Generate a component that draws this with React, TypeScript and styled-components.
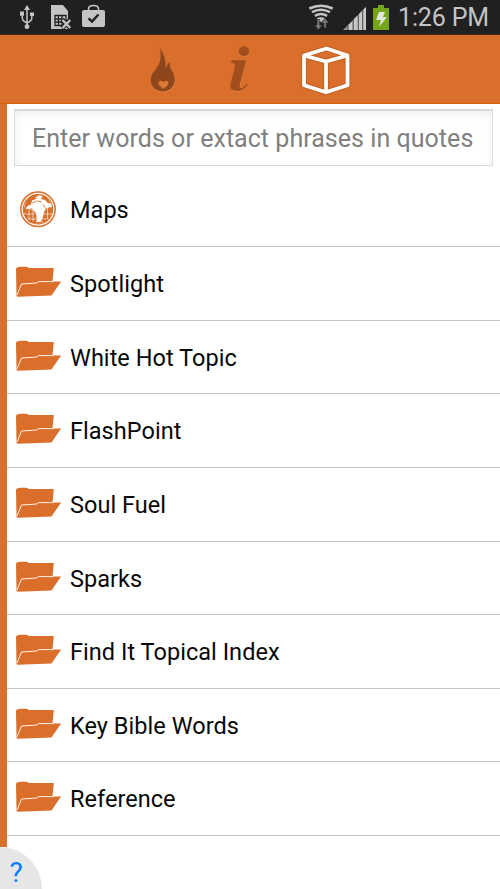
import React from "react";
import styled, { createGlobalStyle } from "styled-components";

const ORANGE = "#d96f2b";

const GlobalStyle = createGlobalStyle`
  * { box-sizing: border-box; }
  body { margin: 0; background: #fff; font-family: Roboto, "Noto Sans", sans-serif; overflow: hidden; }
`;

const Screen = styled.div`
  position: relative;
  width: 500px;
  height: 889px;
  overflow: hidden;
  display: flex;
  flex-direction: column;
  background: #fff;
`;

const StatusBar = styled.header`
  height: 35px;
  flex: none;
  display: flex;
  justify-content: space-between;
  background: #202020;
  border-bottom: 1px solid #4a2c18;
`;

const StatusGroup = styled.div`
  display: flex;
`;

const Clock = styled.time`
  width: 103px;
  padding-left: 1px;
  color: #c4c4c4;
  font-size: 25px;
  line-height: 35px;
  letter-spacing: -0.15px;
  white-space: nowrap;
`;

const TabBar = styled.nav`
  height: 69px;
  flex: none;
  display: flex;
  padding-left: 140px;
  background: ${ORANGE};
  border-bottom: 1px solid #d45f08;
`;

const Tab = styled.button<{ $width: number }>`
  width: ${(p) => p.$width}px;
  padding: 0;
  border: 0;
  background: none;
  display: flex;
`;

const Content = styled.main`
  flex: 1;
  min-height: 0;
  border-left: 7px solid ${ORANGE};
`;

const SearchInput = styled.input`
  display: block;
  width: 479px;
  height: 57px;
  margin: 5px 0 7.4px 7px;
  padding: 1px 0 0 17px;
  border: 1px solid #dcdcdc;
  border-top: 2px solid #d9d9d9;
  border-radius: 0;
  box-shadow: inset 0 3px 9px rgba(0, 0, 0, 0.07);
  background: #fff;
  font: 25px Roboto, sans-serif;
  letter-spacing: 0.04px;
  &::placeholder { color: #808080; opacity: 1; }
`;

const List = styled.ul`
  list-style: none;
  margin: 0;
  padding: 0;
`;

const Row = styled.li`
  height: 73.63px;
  display: flex;
  border-bottom: 1px solid #c4c4c4;
  color: #080808;
  font-size: 23.5px;
  letter-spacing: 0.04px;
  line-height: 75px;
`;

const RowIcon = styled.div`
  width: 63px;
  flex: none;
  display: flex;
  line-height: 0;
`;

const Help = styled.button`
  position: absolute;
  left: 0;
  bottom: 0;
  width: 42px;
  height: 42px;
  padding: 9px 0 0 9.5px;
  border: 0;
  border-radius: 0 42px 0 0;
  background: #e6e6e6;
  color: #087cff;
  font: 28px/34px Roboto, sans-serif;
  text-align: left;
`;

const HelpCorner = styled.div`
  position: absolute;
  left: 0;
  bottom: 0;
  width: 7px;
  height: 42px;
  background: #fff;
`;

const NoticeIcons = () => (
  <svg width="125" height="34" viewBox="0 0 125 34" fill="none">
    <g stroke="#c4c4c4" strokeWidth="1.5">
      <path d="M27 8v19M22.3 14v4q0 3 4.7 5M31.8 14v4q0 3-4.8 5" />
    </g>
    <g fill="#c4c4c4">
      <path d="M27 5l3 5h-6zM20 11.5h4v4h-4zM30 12.5h4v3.6h-4z" />
      <circle cx="22" cy="14" r="2.1" />
      <circle cx="27" cy="26.7" r="2.4" />
      <path d="M51 5h12l5 6v18H51z" />
      <path d="M84 10h19q2 0 2 2v13q0 2-2 2H84q-2 0-2-2V12q0-2 2-2z" />
    </g>
    <path d="M55 15.500h11v10H55zM58.500 15.500v10M62 15.500v10M55 19h7M55 22h10" stroke="#202020" strokeWidth="1.3" />
    <path d="M62 19.500l8.500 8.500M70.500 19.500L62 28" stroke="#202020" strokeWidth="4.600" />
    <path d="M62.500 20l7.800 8M70.300 20l-7.800 8" stroke="#c4c4c4" strokeWidth="2.300" />
    <path d="M88.500 10.500V9q0-3.400 5-3.400t5 3.400v1.500" stroke="#c4c4c4" strokeWidth="1.500" />
    <path d="M88.500 18.300l3.500 3.200 6.500-7" stroke="#202020" strokeWidth="2.400" />
  </svg>
);

const SignalIcons = () => (
  <svg width="92" height="34" viewBox="306 0 92 34" fill="none">
    <g stroke="#c4c4c4" strokeWidth="2.500">
      <path d="M310.300 8.500q11.700-5.500 23.400 0M313 12.200q9-4.700 18 0M315.900 15.800q6.100-3.500 12.200 0" />
    </g>
    <path d="M317.600 18.300q4.400-2.300 8.800 0L322 22.500z" fill="#c4c4c4" />
    <path d="M318 19.500h2.800V25h2.400l-3.800 5-3.800-5h2.400zM324.800 28v-5H322l4-5 4 5h-2.700v5z" fill="#777" stroke="#202020" strokeWidth=".6" />
    <path d="M344 30L367 7v23z" fill="#929292" />
    <g fill="#c8c8c8">
      <path d="M349.500 25l4-4v9h-4zM355 19l3.700-3.700V30H355zM360 14l3-3v19h-3zM364.300 9.700L367 7v23h-2.700z" />
    </g>
    <path d="M349 24.500V30M354.200 19v11M359.300 15v15M363.700 10v20" stroke="#444" strokeWidth=".7" />
    <path d="M379 5h6v3h5v22h-16V8h5z" fill="#75a51b" />
    <path d="M380 12h6l-2 5h4l-8 10 2-7h-5z" fill="#e2e5dc" />
  </svg>
);

const FlameIcon = () => (
  <svg width="48" height="68" viewBox="140 35 48 68">
    <path d="M159.500 47.500q7 9 6.300 20.500 1.500-4.500 4.500-6-1 6 2.500 10 2 3 2 7.500c0 7-5 12-12 12s-12-5-12-11.500c0-9 9-12 9.800-22q.5-6-1.100-10.500z" fill="#e38b50" transform="translate(.4 .7)" />
    <path d="M159.500 47.500q7 9 6.300 20.500 1.500-4.500 4.500-6-1 6 2.500 10 2 3 2 7.500c0 7-5 12-12 12s-12-5-12-11.500c0-9 9-12 9.800-22q.5-6-1.100-10.500z" fill="#8f461b" />
    <path d="M163.400 89l-4-3.500c-3-4 2-6.500 4-2.900 2-3.600 7-1.100 4 2.900z" fill="#dc7937" />
  </svg>
);

const InfoShape = () => (
  <>
    <ellipse cx="244" cy="51.300" rx="5.300" ry="5" />
    <path d="M231.500 60.300h14.800l-6.300 24q-.9 4 .8 4 2.200 0 6-4.800l1.300 1q-4.600 6.700-11.400 6.600-7.800 0-6.200-7l4.300-16.600q1.200-4.500-3.800-4.500z" />
  </>
);

const InfoIcon = () => (
  <svg width="104" height="68" viewBox="188 35 104 68">
    <g fill="#df7f42" transform="translate(.5 .8)"><InfoShape /></g>
    <g fill="#a24f1d"><InfoShape /></g>
  </svg>
);

const CubeIcon = () => (
  <svg width="78" height="68" viewBox="292 35 78 68" fill="none" strokeLinejoin="round">
    <path d="M304 55.500l22.500-7 21 7v29.800l-21.500 7-22-7zM304 55.500l22 6 21.500-6M326 61.500v30.500" stroke="#9c501f" strokeOpacity=".35" strokeWidth="6" />
    <path d="M304 55.500l22.500-7 21 7v29.800l-21.500 7-22-7zM304 55.500l22 6 21.500-6M326 61.500v30.500" stroke="#fff" strokeWidth="3.800" />
  </svg>
);

const GlobeIcon = () => (
  <svg width="63" height="73" viewBox="7 173 63 73" fill={ORANGE}>
    <circle cx="38" cy="209.300" r="17.200" fill="#fff" stroke={ORANGE} strokeWidth="1.500" />
    <circle cx="38" cy="209.300" r="14.700" fill="#fff" stroke={ORANGE} strokeWidth="1.100" />
    <path d="M26 201l4-4 6-2.500 3 1-4 2 2 1-5 2-1 4-4 2-2 4h-1.500zM43 195.500l4 2 4 6-3-.5-3-3-4-1zM23.700 210l5-1.500 3 1 3 2 2 4v5l-2 3-6-2.500-4-5zM52 207v6l-3 6-5 3-3-1 2-4 1-5 2-4z" />
    <path d="M35 202l5-1 4 2 3 5-3 3-1 4-3 5-3-1-1-7-4-2-1-4z" fill="#fff" />
    <path d="M32 203l5-2 5 1M43 204l3 5M31 208l3 3" fill="none" stroke={ORANGE} strokeWidth=".8" />
    <path d="M24 214h10M43 214h9M26 219h23M29 205v16M33 209v13M47.500 204v16" fill="none" stroke="#fff" strokeWidth=".6" />
    <path d="M25 217q5 5 13 5 8 0 12-5l-3 4-8 2.800-10-1.500z" />
  </svg>
);

const FolderIcon = () => (
  <svg width="63" height="73" viewBox="7 246.500 63 73" fill={ORANGE}>
    <path d="M16.500 295.500l-.5-27q0-1.800 2-1.800l2-.5h6q2 0 2.500 1.400h25.300l-1.300 13.400h8.600l-9.600 14-33.500 1.200z" />
    <path d="M17 294.500l4.500-11 15.500-1 1.500-1.400h15" fill="none" stroke="#fff" strokeWidth=".9" />
  </svg>
);

const topics = [
  "Maps",
  "Spotlight",
  "White Hot Topic",
  "FlashPoint",
  "Soul Fuel",
  "Sparks",
  "Find It Topical Index",
  "Key Bible Words",
  "Reference",
];

export default function App() {
  return (
    <>
      <GlobalStyle />
      <Screen>
        <StatusBar>
          <NoticeIcons />
          <StatusGroup>
            <SignalIcons />
            <Clock>1:26 PM</Clock>
          </StatusGroup>
        </StatusBar>
        <TabBar>
          <Tab $width={48} aria-label="Flame"><FlameIcon /></Tab>
          <Tab $width={104} aria-label="Information"><InfoIcon /></Tab>
          <Tab $width={78} aria-label="Resources"><CubeIcon /></Tab>
        </TabBar>
        <Content>
          <SearchInput placeholder="Enter words or extact phrases in quotes" />
          <List>
            {topics.map((topic) => (
              <Row key={topic}>
                <RowIcon>{topic === "Maps" ? <GlobeIcon /> : <FolderIcon />}</RowIcon>
                <span>{topic}</span>
              </Row>
            ))}
          </List>
        </Content>
        <HelpCorner />
        <Help>?</Help>
      </Screen>
    </>
  );
}
